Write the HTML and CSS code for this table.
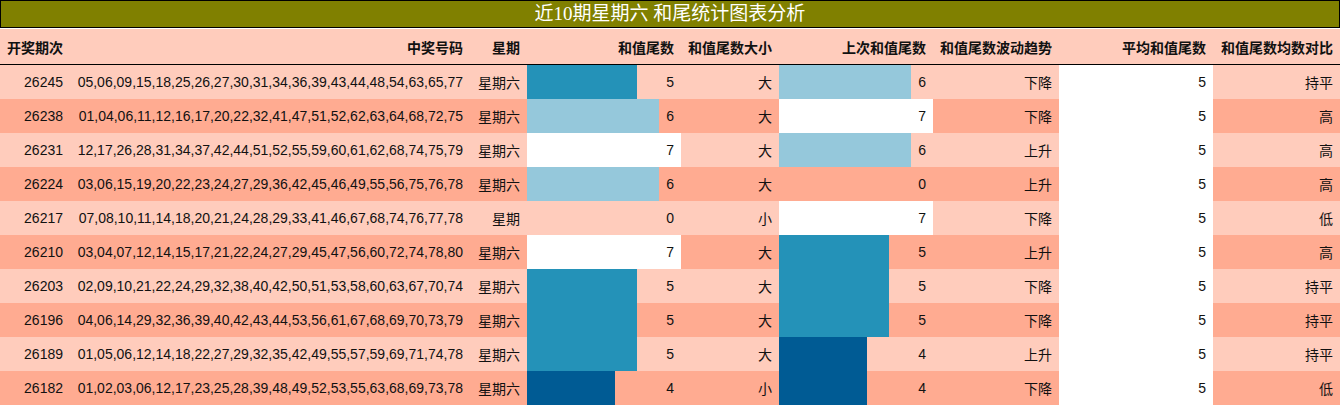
FILE: index.html
```html
<!DOCTYPE html>
<html lang="zh">
<head>
<meta charset="utf-8">
<title>和尾统计图表分析</title>
<link rel="stylesheet" href="styles.css">
</head>
<body>
<div class="title">近10期星期六 和尾统计图表分析</div>
<table class="stats">
  <colgroup>
    <col class="c1"><col class="c2"><col class="c3"><col class="c4"><col class="c5"><col class="c6"><col class="c7"><col class="c8"><col class="c9">
  </colgroup>
  <thead>
    <tr>
      <th>开奖期次</th><th>中奖号码</th><th>星期</th><th>和值尾数</th><th>和值尾数大小</th><th>上次和值尾数</th><th>和值尾数波动趋势</th><th>平均和值尾数</th><th>和值尾数均数对比</th>
    </tr>
  </thead>
  <tbody>
    <tr class="odd">
      <td>26245</td><td>05,06,09,15,18,25,26,27,30,31,34,36,39,43,44,48,54,63,65,77</td><td>星期六</td>
      <td class="bar m" style="--w:71.43%">5</td><td>大</td><td class="bar l" style="--w:85.71%">6</td><td>下降</td><td class="avg">5</td><td>持平</td>
    </tr>
    <tr class="even">
      <td>26238</td><td>01,04,06,11,12,16,17,20,22,32,41,47,51,52,62,63,64,68,72,75</td><td>星期六</td>
      <td class="bar l" style="--w:85.71%">6</td><td>大</td><td class="bar w" style="--w:100%">7</td><td>下降</td><td class="avg">5</td><td>高</td>
    </tr>
    <tr class="odd">
      <td>26231</td><td>12,17,26,28,31,34,37,42,44,51,52,55,59,60,61,62,68,74,75,79</td><td>星期六</td>
      <td class="bar w" style="--w:100%">7</td><td>大</td><td class="bar l" style="--w:85.71%">6</td><td>上升</td><td class="avg">5</td><td>高</td>
    </tr>
    <tr class="even">
      <td>26224</td><td>03,06,15,19,20,22,23,24,27,29,36,42,45,46,49,55,56,75,76,78</td><td>星期六</td>
      <td class="bar l" style="--w:85.71%">6</td><td>大</td><td class="bar w" style="--w:0%">0</td><td>上升</td><td class="avg">5</td><td>高</td>
    </tr>
    <tr class="odd">
      <td>26217</td><td>07,08,10,11,14,18,20,21,24,28,29,33,41,46,67,68,74,76,77,78</td><td>星期</td>
      <td class="bar w" style="--w:0%">0</td><td>小</td><td class="bar w" style="--w:100%">7</td><td>下降</td><td class="avg">5</td><td>低</td>
    </tr>
    <tr class="even">
      <td>26210</td><td>03,04,07,12,14,15,17,21,22,24,27,29,45,47,56,60,72,74,78,80</td><td>星期六</td>
      <td class="bar w" style="--w:100%">7</td><td>大</td><td class="bar m" style="--w:71.43%">5</td><td>上升</td><td class="avg">5</td><td>高</td>
    </tr>
    <tr class="odd">
      <td>26203</td><td>02,09,10,21,22,24,29,32,38,40,42,50,51,53,58,60,63,67,70,74</td><td>星期六</td>
      <td class="bar m" style="--w:71.43%">5</td><td>大</td><td class="bar m" style="--w:71.43%">5</td><td>下降</td><td class="avg">5</td><td>持平</td>
    </tr>
    <tr class="even">
      <td>26196</td><td>04,06,14,29,32,36,39,40,42,43,44,53,56,61,67,68,69,70,73,79</td><td>星期六</td>
      <td class="bar m" style="--w:71.43%">5</td><td>大</td><td class="bar m" style="--w:71.43%">5</td><td>下降</td><td class="avg">5</td><td>持平</td>
    </tr>
    <tr class="odd">
      <td>26189</td><td>01,05,06,12,14,18,22,27,29,32,35,42,49,55,57,59,69,71,74,78</td><td>星期六</td>
      <td class="bar m" style="--w:71.43%">5</td><td>大</td><td class="bar d" style="--w:57.14%">4</td><td>上升</td><td class="avg">5</td><td>持平</td>
    </tr>
    <tr class="even">
      <td>26182</td><td>01,02,03,06,12,17,23,25,28,39,48,49,52,53,55,63,68,69,73,78</td><td>星期六</td>
      <td class="bar d" style="--w:57.14%">4</td><td>小</td><td class="bar d" style="--w:57.14%">4</td><td>下降</td><td class="avg">5</td><td>低</td>
    </tr>
  </tbody>
</table>
</body>
</html>
```

FILE: styles.css
```css
html, body {
  margin: 0;
  padding: 0;
  background: #ffffff;
}

body {
  width: 1340px;
  font-family: "Liberation Sans", "Noto Sans CJK SC", sans-serif;
  font-size: 14px;
  color: #111111;
}

.title {
  box-sizing: border-box;
  height: 28px;
  margin-bottom: 1px;
  border: 1px solid #000000;
  background: #808000;
  color: #ffffff;
  font-family: "Liberation Serif", "Noto Sans CJK SC", serif;
  font-size: 19px;
  line-height: 26px;
  text-align: center;
}

.stats {
  width: 1340px;
  table-layout: fixed;
  border-collapse: collapse;
  border-spacing: 0;
}

.c1 { width: 70px; }
.c2 { width: 400px; }
.c3 { width: 57px; }
.c4 { width: 154px; }
.c5 { width: 98px; }
.c6 { width: 154px; }
.c7 { width: 126px; }
.c8 { width: 154px; }
.c9 { width: 127px; }

.stats th,
.stats td {
  padding: 0 7px;
  text-align: right;
  white-space: nowrap;
  vertical-align: middle;
}

.stats thead tr {
  background: #ffccbc;
}

.stats th {
  height: 35px;
  font-weight: bold;
  border-bottom: 1px solid #000000;
}

.stats td {
  height: 34px;
}

.stats tr.odd { background: #ffccbc; }
.stats tr.even { background: #ffab91; }

.stats td.avg {
  background: #ffffff;
}

.bar {
  --c: #ffffff;
  background: linear-gradient(90deg, var(--c) var(--w), transparent var(--w));
}

.bar.w { --c: #ffffff; }
.bar.l { --c: #95c8db; }
.bar.m { --c: #2492b8; }
.bar.d { --c: #005b94; }
```
